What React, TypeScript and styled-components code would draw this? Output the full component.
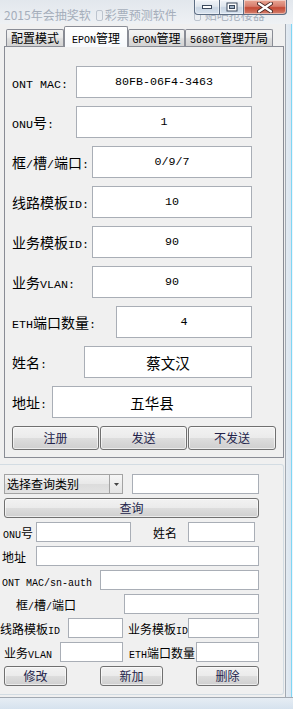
import React from "react";
import styled, { createGlobalStyle } from "styled-components";

const GlobalStyle = createGlobalStyle`
  html, body {
    margin: 0;
    padding: 0;
    background: #f0f0f0;
  }
  body {
    font-family: "Noto Sans CJK SC", sans-serif;
    color: #000;
  }
`;

// ascii runs are drawn half width, like SimSun
const Lat = styled.span`
  font-family: "Liberation Mono", monospace;
  font-size: 0.8333em;
  white-space: pre;
`;

function Mixed({ text }: { text: string }) {
  const parts = text.split(/([\x20-\x7e]+)/).filter(Boolean);
  return (
    <>
      {parts.map((p, i) =>
        /^[\x20-\x7e]+$/.test(p) ? <Lat key={i}>{p}</Lat> : <React.Fragment key={i}>{p}</React.Fragment>
      )}
    </>
  );
}

const Window = styled.div`
  width: 293px;
  height: 709px;
  display: flex;
  flex-direction: column;
  overflow: hidden;
  background: #dbe5f0;
`;

const TitleArea = styled.div`
  position: relative;
  height: 24px;
  flex: none;
  overflow: hidden;
  background: linear-gradient(#e2e7ed, #eef1f4);
`;

const GhostRow = styled.div`
  display: flex;
  align-items: center;
  padding: 7px 0 0 4px;
  font-size: 12px;
  line-height: 16px;
  color: #a5aebb;
  white-space: nowrap;
`;

const GhostText = styled.span<{ $ml?: number }>`
  margin-left: ${({ $ml }) => $ml ?? 0}px;
`;

const GhostBox = styled.span<{ $ml: number }>`
  margin-left: ${({ $ml }) => $ml}px;
  width: 5px;
  height: 9px;
  border: 1px solid #bcc4ce;
  border-radius: 2px;
`;

const Caption = styled.div`
  position: absolute;
  top: 0;
  right: 6px;
  display: flex;
  height: 15px;
`;

const CapButton = styled.div<{ $w: number; $kind: "min" | "max" | "close" }>`
  width: ${({ $w }) => $w}px;
  height: 15px;
  box-sizing: border-box;
  border: 1px solid #5d6e84;
  border-top: none;
  border-left-width: ${({ $kind }) => ($kind === "min" ? 1 : 0)}px;
  border-radius: ${({ $kind }) =>
    $kind === "min" ? "0 0 0 4px" : $kind === "close" ? "0 0 4px 0" : "0"};
  background: ${({ $kind }) =>
    $kind === "close"
      ? "linear-gradient(#e9a795, #d77d6d 45%, #c44934 55%, #d4806e)"
      : "linear-gradient(#f1f4f8, #dfe6ee 45%, #c9d5e3 55%, #d8e3ef)"};
  box-shadow: inset 0 0 0 1px rgba(255, 255, 255, 0.45);
  display: flex;
  align-items: center;
  justify-content: center;
`;

const Body = styled.div`
  flex: 1;
  display: flex;
  min-height: 0;
`;

const Client = styled.div`
  width: 285px;
  flex: none;
  display: flex;
  flex-direction: column;
  background: #f0f0f0;
`;

const FrameEdge = styled.div`
  width: 7px;
  border-left: 1px solid #a2a9b2;
  background: linear-gradient(
    90deg,
    #e4ebf2 0,
    #d9e4ef 5px,
    #7fd6f4 5px,
    #7fd6f4 6px,
    #eef4fa 6px
  );
`;

const BottomFrame = styled.div`
  height: 11px;
  flex: none;
  border-top: 1px solid #a2a9b2;
  background: linear-gradient(#e6edf4, #d6e2ee);
`;

const TabStrip = styled.div`
  height: 22px;
  display: flex;
  align-items: flex-end;
  padding-left: 6px;
`;

const Tab = styled.div<{ $w: number; $active?: boolean }>`
  position: relative;
  z-index: ${({ $active }) => ($active ? 1 : 0)};
  width: ${({ $w }) => $w}px;
  height: ${({ $active }) => ($active ? 21 : 17)}px;
  margin-bottom: ${({ $active }) => ($active ? -1 : 0)}px;
  box-sizing: border-box;
  border: 1px solid #898c95;
  border-bottom: none;
  border-radius: 2px 2px 0 0;
  background: ${({ $active }) =>
    $active
      ? "linear-gradient(#ffffff, #f7f9fc)"
      : "linear-gradient(#f3f3f3, #ebebeb 45%, #dedede 55%, #d3d3d3)"};
  padding-top: ${({ $active }) => ($active ? 3 : 0)}px;
  font-size: 12px;
  line-height: 16px;
  text-align: center;
  white-space: nowrap;
`;

const Panel = styled.div`
  width: 280px;
  height: 412px;
  margin-left: 4px;
  box-sizing: border-box;
  border: 1px solid #898c95;
  padding: 19px 0 7px 7px;
  display: flex;
  flex-direction: column;
  gap: 8px;
`;

const FormRow = styled.div`
  width: 240px;
  height: 32px;
  display: flex;
  align-items: center;
  justify-content: space-between;
  font-size: 14px;
`;

const Field = styled.div<{ $w: number; $h: number; $text?: "cjk" }>`
  width: ${({ $w }) => $w}px;
  height: ${({ $h }) => $h}px;
  flex: none;
  box-sizing: border-box;
  border: 1px solid #a9aeb6;
  background: #fff;
  display: flex;
  align-items: center;
  justify-content: center;
  font-size: ${({ $text }) => ($text === "cjk" ? 14.5 : 14)}px;
  font-weight: 400;
`;

const ButtonRow = styled.div<{ $gap: number; $pl?: number }>`
  display: flex;
  gap: ${({ $gap }) => $gap}px;
  padding-left: ${({ $pl }) => $pl ?? 0}px;
`;

const Button = styled.button<{ $w: number; $h: number }>`
  width: ${({ $w }) => $w}px;
  height: ${({ $h }) => $h}px;
  box-sizing: border-box;
  padding: 0;
  border: 1px solid #707070;
  border-radius: 3px;
  background: linear-gradient(#f2f2f2 0%, #ebebeb 48%, #dddddd 52%, #cfcfcf 100%);
  box-shadow: inset 0 0 0 1px rgba(255, 255, 255, 0.6);
  font-family: "Noto Sans CJK SC", sans-serif;
  font-size: 12px;
  line-height: 1;
  color: #23234a;
`;

const GroupBox = styled.div`
  width: 284px;
  margin-top: 6px;
  box-sizing: border-box;
  border: 1px solid #d3dce3;
  border-left: none;
  border-radius: 0 3px 3px 0;
  padding: 9px 0 8px;
  display: flex;
  flex-direction: column;
  gap: 4px;
`;

const QueryRow = styled.div<{ $pl?: number }>`
  height: 20px;
  display: flex;
  align-items: center;
  padding-left: ${({ $pl }) => $pl ?? 0}px;
  font-size: 12px;
`;

const Cap = styled.div<{ $w: number; $indent: number }>`
  width: ${({ $w }) => $w}px;
  flex: none;
  box-sizing: border-box;
  padding-left: ${({ $indent }) => $indent}px;
  white-space: nowrap;
  font-size: 12px;
`;

const Combo = styled.div`
  width: 119px;
  height: 20px;
  margin-right: 9px;
  box-sizing: border-box;
  border: 1px solid #a3a3a3;
  display: flex;
  background: linear-gradient(#f2f2f2, #e9e9e9 48%, #dcdcdc 52%, #e3e3e3);
`;

const ComboText = styled.div`
  flex: 1;
  padding-left: 2px;
  font-size: 12px;
  line-height: 18px;
`;

const ComboArrow = styled.div`
  width: 13px;
  box-sizing: border-box;
  border-left: 1px solid #a3a3a3;
  background: linear-gradient(#f6f6f6, #e4e4e4);
  display: flex;
  align-items: center;
  justify-content: center;
`;

const formRows: { label: string; value: string; w: number; cjk?: boolean }[] = [
  { label: "ONT MAC:", value: "80FB-06F4-3463", w: 176 },
  { label: "ONU号:", value: "1", w: 176 },
  { label: "框/槽/端口:", value: "0/9/7", w: 160 },
  { label: "线路模板ID:", value: "10", w: 160 },
  { label: "业务模板ID:", value: "90", w: 160 },
  { label: "业务VLAN:", value: "90", w: 160 },
  { label: "ETH端口数量:", value: "4", w: 136 },
  { label: "姓名:", value: "蔡文汉", w: 168, cjk: true },
  { label: "地址:", value: "五华县", w: 200, cjk: true },
];

export default function App() {
  return (
    <>
      <GlobalStyle />
      <Window>
        <TitleArea>
          <GhostRow>
            <GhostText>2015年会抽奖软</GhostText>
            <GhostBox $ml={5} />
            <GhostText $ml={2}>彩票预测软件</GhostText>
            <GhostBox $ml={17} />
            <GhostText $ml={4}>贴吧抢楼器</GhostText>
          </GhostRow>
          <Caption>
            <CapButton $w={26} $kind="min">
              <svg width="12" height="6" viewBox="0 0 12 6">
                <rect x="1.5" y="1.5" width="9" height="3" fill="#fff" stroke="#3b495c" />
              </svg>
            </CapButton>
            <CapButton $w={24} $kind="max">
              <svg width="12" height="10" viewBox="0 0 12 10">
                <rect x="0.5" y="0.5" width="11" height="9" fill="#3b495c" />
                <rect x="1.5" y="1.5" width="9" height="7" fill="#fff" />
                <rect x="3.5" y="3.5" width="5" height="3" fill="#9fb0c4" stroke="#3b495c" />
              </svg>
            </CapButton>
            <CapButton $w={43} $kind="close">
              <svg width="16" height="11" viewBox="0 0 16 11">
                <path d="M2 1.5 L14 9.5 M14 1.5 L2 9.5" stroke="#4a2622" strokeWidth="4" strokeLinecap="round" />
                <path d="M2 1.5 L14 9.5 M14 1.5 L2 9.5" stroke="#fff" strokeWidth="2.2" strokeLinecap="round" />
              </svg>
            </CapButton>
          </Caption>
        </TitleArea>

        <Body>
          <Client>
            <TabStrip>
              <Tab $w={58}>配置模式</Tab>
              <Tab $w={64} $active>
                <Mixed text="EPON管理" />
              </Tab>
              <Tab $w={57}>
                <Mixed text="GPON管理" />
              </Tab>
              <Tab $w={88}>
                <Mixed text="5680T管理开局" />
              </Tab>
            </TabStrip>

            <Panel>
              {formRows.map((r) => (
                <FormRow key={r.label}>
                  <span>
                    <Mixed text={r.label} />
                  </span>
                  <Field $w={r.w} $h={32} $text={r.cjk ? "cjk" : undefined}>
                    <Mixed text={r.value} />
                  </Field>
                </FormRow>
              ))}
              <ButtonRow $gap={1}>
                <Button $w={87} $h={24}>注册</Button>
                <Button $w={87} $h={24}>发送</Button>
                <Button $w={88} $h={24}>不发送</Button>
              </ButtonRow>
            </Panel>

            <GroupBox>
              <QueryRow $pl={4}>
                <Combo>
                  <ComboText>选择查询类别</ComboText>
                  <ComboArrow>
                    <svg width="5" height="3" viewBox="0 0 5 3">
                      <path d="M0 0 H5 L2.5 3 Z" fill="#444" />
                    </svg>
                  </ComboArrow>
                </Combo>
                <Field $w={127} $h={20} />
              </QueryRow>
              <QueryRow $pl={4}>
                <Button $w={255} $h={20}>查询</Button>
              </QueryRow>
              <QueryRow>
                <Cap $w={36} $indent={3}>
                  <Mixed text="ONU号" />
                </Cap>
                <Field $w={95} $h={20} />
                <Cap $w={57} $indent={22}>姓名</Cap>
                <Field $w={67} $h={20} />
              </QueryRow>
              <QueryRow>
                <Cap $w={36} $indent={2}>地址</Cap>
                <Field $w={223} $h={20} />
              </QueryRow>
              <QueryRow>
                <Cap $w={100} $indent={2}>
                  <Mixed text="ONT MAC/sn-auth" />
                </Cap>
                <Field $w={159} $h={20} />
              </QueryRow>
              <QueryRow>
                <Cap $w={124} $indent={16}>
                  <Mixed text="框/槽/端口" />
                </Cap>
                <Field $w={135} $h={20} />
              </QueryRow>
              <QueryRow>
                <Cap $w={68} $indent={0}>
                  <Mixed text="线路模板ID" />
                </Cap>
                <Field $w={55} $h={20} />
                <Cap $w={65} $indent={5}>
                  <Mixed text="业务模板ID" />
                </Cap>
                <Field $w={71} $h={20} />
              </QueryRow>
              <QueryRow>
                <Cap $w={60} $indent={4}>
                  <Mixed text="业务VLAN" />
                </Cap>
                <Field $w={63} $h={20} />
                <Cap $w={73} $indent={6}>
                  <Mixed text="ETH端口数量" />
                </Cap>
                <Field $w={63} $h={20} />
              </QueryRow>
              <ButtonRow $gap={33} $pl={4}>
                <Button $w={63} $h={20}>修改</Button>
                <Button $w={63} $h={20}>新加</Button>
                <Button $w={63} $h={20}>删除</Button>
              </ButtonRow>
            </GroupBox>
          </Client>
          <FrameEdge />
        </Body>
        <BottomFrame />
      </Window>
    </>
  );
}
